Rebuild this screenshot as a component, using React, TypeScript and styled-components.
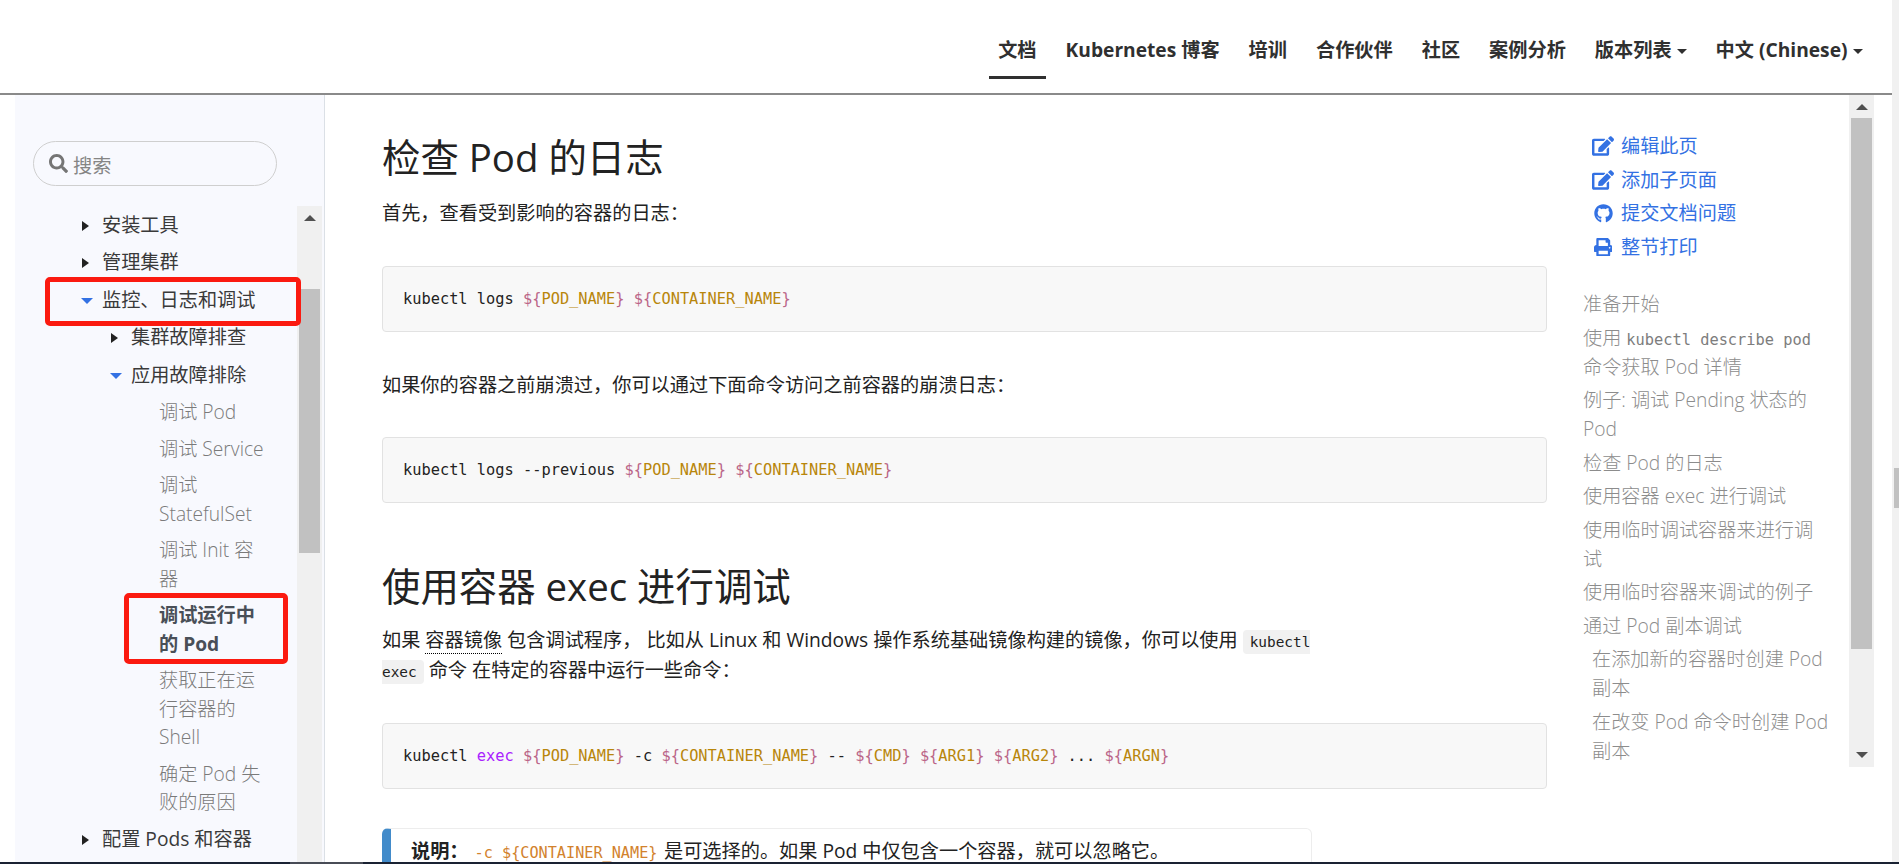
import React from 'react';
import styled, { createGlobalStyle } from 'styled-components';
import { FaEdit, FaGithub, FaPrint, FaSearch } from 'react-icons/fa';

const sans = `"Open Sans", "Noto Sans CJK SC", sans-serif`;
const mono = `"DejaVu Sans Mono", "Noto Sans CJK SC", monospace`;

const Global = createGlobalStyle`
  html, body { margin: 0; padding: 0; height: 100%; overflow: hidden; background: #fff; }
  body { font-family: ${sans}; font-size: 19.2px; line-height: 28.8px; color: #222; }
  * { box-sizing: border-box; }
`;

const Frame = styled.div`
  width: 1899px;
  height: 864px;
  display: flex;
  flex-direction: column;
  overflow: hidden;
`;
const Shell = styled.div`
  flex: 1;
  min-height: 0;
  display: flex;
`;
const Page = styled.div`
  width: 1892px;
  display: flex;
  flex-direction: column;
`;
const PageTrack = styled.div`
  width: 7px;
  background: #f1f1f1;
  padding: 468px 0 0 2px;
`;
const PageThumb = styled.div`
  height: 40px;
  background: #c1c1c1;
`;
const Taskbar = styled.div`
  height: 2px;
  display: flex;
  background: #1a2233;
`;
const TaskbarLit = styled.div`
  width: 73px;
  margin-left: 290px;
  background: #484c56;
`;

const Nav = styled.nav`
  height: 95px;
  flex: none;
  border-bottom: 2px solid #8a8a8a;
  display: flex;
  justify-content: flex-end;
  padding: 0 15px 0 0;
`;
const NavLink = styled.a<{ $active?: boolean }>`
  position: relative;
  height: 93px;
  padding: 36px 14.5px 0;
  font-weight: 700;
  font-size: 19.2px;
  color: #303030;
  white-space: nowrap;
  ${p =>
    p.$active &&
    `&::after {
      content: '';
      position: absolute;
      left: 5px;
      right: 5px;
      top: 76px;
      height: 3px;
      background: #303030;
    }`}
`;
const Caret = styled.span`
  display: inline-block;
  margin-left: 5px;
  vertical-align: 3px;
  border-top: 5px solid #303030;
  border-left: 5px solid transparent;
  border-right: 5px solid transparent;
`;

const Body = styled.div`
  flex: 1;
  min-height: 0;
  display: flex;
`;

const Sidebar = styled.aside`
  flex: none;
  width: 310px;
  margin-left: 15px;
  background: #f8f9fe;
  border-right: 1px solid #dbe0e6;
  padding-top: 46px;
  display: flex;
  flex-direction: column;
`;
const Search = styled.label`
  width: 244px;
  height: 45px;
  margin: 0 0 20px 18px;
  flex: none;
  border: 1px solid #cfcfcf;
  border-radius: 23px;
  display: flex;
  align-items: center;
  padding-left: 15px;
  gap: 5px;
  color: #757575;
  font-size: 19px;
`;
const SearchInput = styled.input`
  border: 0;
  outline: 0;
  background: transparent;
  width: 170px;
  padding: 3px 0 0;
  font: 19.2px ${sans};
  &::placeholder { color: #858585; opacity: 1; }
`;
const TreeRow = styled.div`
  flex: 1;
  min-height: 0;
  display: flex;
  padding-left: 87px;
`;
const Tree = styled.ul`
  list-style: none;
  margin: 0;
  padding: 0.6px 0 0;
  width: 167px;
  flex: none;
`;
const SubTree = styled.ul`
  list-style: none;
  margin: 0;
  padding: 0 0 0 29px;
`;
const LeafTree = styled.ul`
  list-style: none;
  margin: 0;
  padding: 0 0 0 28px;
`;
const Node = styled.div<{ $open?: boolean; $arrow?: boolean; $leaf?: boolean; $current?: boolean }>`
  position: relative;
  padding: ${p => (p.$leaf ? '4.1px 0' : '4.35px 0')};
  line-height: ${p => (p.$leaf ? '28.4px' : '28.8px')};
  color: ${p => (p.$current ? '#494f57' : p.$leaf ? '#7a7a7a' : '#3a3a3a')};
  font-weight: ${p => (p.$current ? 700 : p.$leaf ? 300 : 400)};
  ${p =>
    p.$arrow &&
    (p.$open
      ? `&::before {
          content: '';
          position: absolute;
          left: -21px;
          top: 16px;
          border-top: 6px solid #3371e3;
          border-left: 6px solid transparent;
          border-right: 6px solid transparent;
        }`
      : `&::before {
          content: '';
          position: absolute;
          left: -20px;
          top: 14px;
          border-left: 7px solid #222;
          border-top: 5px solid transparent;
          border-bottom: 5px solid transparent;
        }`)}
`;
const Mark = styled.span<{ $top: number; $left: number; $right: number; $bottom: number }>`
  position: absolute;
  z-index: 1;
  top: ${p => p.$top}px;
  left: ${p => p.$left}px;
  right: ${p => p.$right}px;
  bottom: ${p => p.$bottom}px;
  border: 5px solid #fb1a10;
  border-radius: 5px;
  pointer-events: none;
`;
const VScroll = styled.div<{ $ml: number; $height?: number }>`
  position: relative;
  flex: none;
  width: 25px;
  height: ${p => (p.$height ? `${p.$height}px` : 'auto')};
  margin-left: ${p => p.$ml}px;
  background: #f0f0f0;
  padding: 0 2px;
`;
const Thumb = styled.div<{ $top: number; $height: number }>`
  margin-top: ${p => p.$top}px;
  height: ${p => p.$height}px;
  background: #c1c1c1;
`;
const ArrowUp = styled.span`
  position: absolute;
  top: 9px;
  left: 7px;
  border-bottom: 6px solid #505050;
  border-left: 6px solid transparent;
  border-right: 6px solid transparent;
`;
const ArrowDown = styled.span`
  position: absolute;
  bottom: 9px;
  left: 7px;
  border-top: 6px solid #505050;
  border-left: 6px solid transparent;
  border-right: 6px solid transparent;
`;

const Main = styled.main`
  flex: none;
  width: 1222px;
  padding-left: 57px;
`;
const Heading = styled.h2<{ $mt: number }>`
  margin: ${p => p.$mt}px 0 0;
  font-size: 38.4px;
  line-height: 46px;
  font-weight: 400;
  color: #222;
`;
const Para = styled.p<{ $mt: number; $lh?: number }>`
  margin: ${p => p.$mt}px 0 0;
  max-width: 930px;
  color: #222;
  line-height: ${p => p.$lh ?? 28.8}px;
`;
const Term = styled.span`
  border-bottom: 1px dotted #000;
`;
const Inline = styled.code`
  font-family: ${mono};
  font-size: 14.4px;
  line-height: 1;
  background: #f1f1f1;
  border-radius: 4px;
  padding: 4px 7px;
  color: #222;
`;
const Block = styled.pre<{ $mt: number }>`
  margin: ${p => p.$mt}px 0 0;
  width: 1165px;
  height: 66px;
  background: #f8f8f8;
  border: 1px solid #e2e2e2;
  border-radius: 4px;
  padding: 18px 20px 0;
  font-family: ${mono};
  font-size: 15.33px;
  line-height: 28.8px;
  color: #222;
`;
const Subst = styled.span`
  color: #bb6688;
`;
const Var = styled.span`
  color: #b8860b;
`;
const Builtin = styled.span`
  color: #aa22ff;
`;
const Note = styled.div`
  margin-top: 39px;
  width: 930px;
  height: 60px;
  border: 1px solid #ededed;
  border-left: 9px solid #428bca;
  border-radius: 6px;
  padding: 8px 0 0 20px;
  color: #222;
`;
const NoteLabel = styled.strong`
  margin-right: 6px;
`;
const NoteCode = styled.code`
  font-family: ${mono};
  font-size: 15.2px;
  line-height: 1;
  color: #d2822d;
  margin-right: 6.5px;
`;

const Aside = styled.aside`
  flex: none;
  width: 345px;
  display: flex;
  padding-left: 36px;
`;
const TocColumn = styled.div`
  width: 247px;
  flex: none;
  padding-top: 34.6px;
`;
const EditLink = styled.a`
  display: flex;
  align-items: center;
  height: 33.6px;
  color: #3371e3;
  padding-left: 8px;
  white-space: nowrap;
`;
const EditIcon = styled.span`
  width: 24px;
  margin-right: 6px;
  display: flex;
  justify-content: center;
`;
const TocList = styled.ul`
  list-style: none;
  margin: 24px 0 0;
  padding: 0;
`;
const TocItem = styled.li<{ $sub?: boolean }>`
  padding: 2.4px 0 2.4px ${p => (p.$sub ? 9 : 0)}px;
  color: #8c8c8c;
  font-weight: 300;
`;
const TocCode = styled.code`
  font-family: ${mono};
  font-size: 15.33px;
  font-weight: 400;
  line-height: 1;
  color: #7d7d7d;
`;

const V = ({ n }: { n: string }) => (
  <>
    <Subst>{'${'}</Subst>
    <Var>{n}</Var>
    <Subst>{'}'}</Subst>
  </>
);

const navItems: { label: string; active?: boolean; caret?: boolean }[] = [
  { label: '文档', active: true },
  { label: 'Kubernetes 博客' },
  { label: '培训' },
  { label: '合作伙伴' },
  { label: '社区' },
  { label: '案例分析' },
  { label: '版本列表', caret: true },
  { label: '中文 (Chinese)', caret: true },
];

const leaves = ['调试 Pod', '调试 Service', '调试 StatefulSet', '调试 Init 容器'];
const leavesAfter = ['获取正在运行容器的 Shell', '确定 Pod 失败的原因'];

export default function App() {
  return (
    <Frame>
      <Global />
      <Shell>
        <Page>
          <Nav>
            {navItems.map(n => (
              <NavLink key={n.label} $active={n.active}>
                {n.label}
                {n.caret && <Caret />}
              </NavLink>
            ))}
          </Nav>
          <Body>
            <Sidebar>
              <Search>
                <FaSearch />
                <SearchInput placeholder="搜索" />
              </Search>
              <TreeRow>
                <Tree>
                  <li><Node $arrow>安装工具</Node></li>
                  <li><Node $arrow>管理集群</Node></li>
                  <li>
                    <Node $arrow $open>
                      监控、日志和调试
                      <Mark $top={-5} $left={-57} $right={-32} $bottom={-7} />
                    </Node>
                    <SubTree>
                      <li><Node $arrow>集群故障排查</Node></li>
                      <li>
                        <Node $arrow $open>应用故障排除</Node>
                        <LeafTree>
                          {leaves.map(l => (
                            <li key={l}><Node $leaf>{l}</Node></li>
                          ))}
                          <li>
                            <Node $leaf $current>
                              调试运行中的 Pod
                              <Mark $top={-4} $left={-35} $right={-19} $bottom={-2} />
                            </Node>
                          </li>
                          {leavesAfter.map(l => (
                            <li key={l}><Node $leaf>{l}</Node></li>
                          ))}
                        </LeafTree>
                      </li>
                    </SubTree>
                  </li>
                  <li><Node $arrow>配置 Pods 和容器</Node></li>
                </Tree>
                <VScroll $ml={28}>
                  <ArrowUp />
                  <Thumb $top={83} $height={264} />
                </VScroll>
              </TreeRow>
            </Sidebar>
            <Main>
              <Heading $mt={39}>检查 Pod 的日志</Heading>
              <Para $mt={19}>首先，查看受到影响的容器的日志：</Para>
              <Block $mt={38}>
                kubectl logs <V n="POD_NAME" /> <V n="CONTAINER_NAME" />
              </Block>
              <Para $mt={39}>如果你的容器之前崩溃过，你可以通过下面命令访问之前容器的崩溃日志：</Para>
              <Block $mt={37}>
                kubectl logs --previous <V n="POD_NAME" /> <V n="CONTAINER_NAME" />
              </Block>
              <Heading $mt={60}>使用容器 exec 进行调试</Heading>
              <Para $mt={16.5} $lh={30}>
                如果 <Term>容器镜像</Term> 包含调试程序， 比如从 Linux 和 Windows 操作系统基础镜像构建的镜像，你可以使用 <Inline>kubectl exec</Inline> 命令 在特定的容器中运行一些命令：
              </Para>
              <Block $mt={37.5}>
                kubectl <Builtin>exec</Builtin> <V n="POD_NAME" /> -c <V n="CONTAINER_NAME" /> -- <V n="CMD" /> <V n="ARG1" /> <V n="ARG2" /> ... <V n="ARGN" />
              </Block>
              <Note>
                <NoteLabel>说明：</NoteLabel>
                <NoteCode>-c {'${CONTAINER_NAME}'}</NoteCode>
                是可选择的。如果 Pod 中仅包含一个容器，就可以忽略它。
              </Note>
            </Main>
            <Aside>
              <TocColumn>
                <EditLink><EditIcon><FaEdit size={22} /></EditIcon>编辑此页</EditLink>
                <EditLink><EditIcon><FaEdit size={22} /></EditIcon>添加子页面</EditLink>
                <EditLink><EditIcon><FaGithub size={19} /></EditIcon>提交文档问题</EditLink>
                <EditLink><EditIcon><FaPrint size={18.5} /></EditIcon>整节打印</EditLink>
                <TocList>
                  <TocItem>准备开始</TocItem>
                  <TocItem>使用 <TocCode>kubectl describe pod</TocCode> 命令获取 Pod 详情</TocItem>
                  <TocItem>例子: 调试 Pending 状态的 Pod</TocItem>
                  <TocItem>检查 Pod 的日志</TocItem>
                  <TocItem>使用容器 exec 进行调试</TocItem>
                  <TocItem>使用临时调试容器来进行调试</TocItem>
                  <TocItem>使用临时容器来调试的例子</TocItem>
                  <TocItem>通过 Pod 副本调试</TocItem>
                  <TocItem $sub>在添加新的容器时创建 Pod 副本</TocItem>
                  <TocItem $sub>在改变 Pod 命令时创建 Pod 副本</TocItem>
                </TocList>
              </TocColumn>
              <VScroll $ml={19} $height={672}>
                <ArrowUp />
                <ArrowDown />
                <Thumb $top={23} $height={531} />
              </VScroll>
            </Aside>
          </Body>
        </Page>
        <PageTrack>
          <PageThumb />
        </PageTrack>
      </Shell>
      <Taskbar>
        <TaskbarLit />
      </Taskbar>
    </Frame>
  );
}
